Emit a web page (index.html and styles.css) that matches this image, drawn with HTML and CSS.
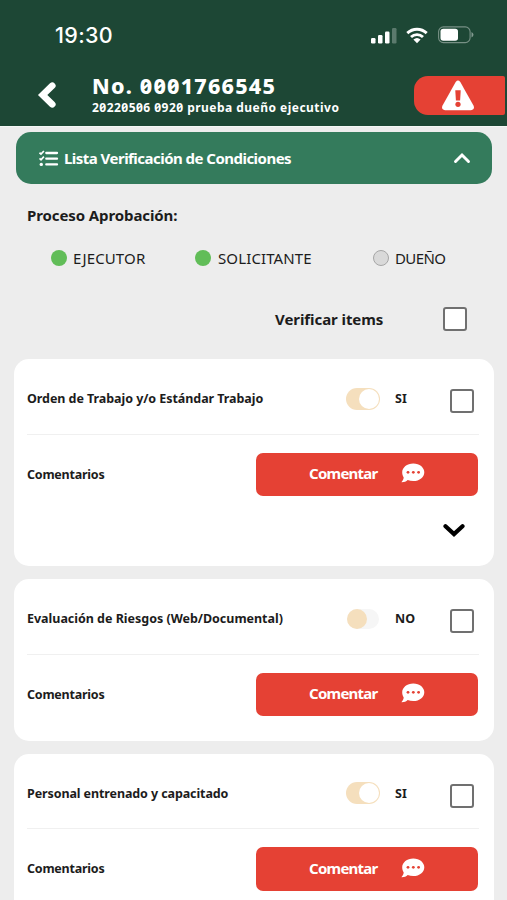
FILE: index.html
```html
<!DOCTYPE html>
<html lang="es">
<head>
<meta charset="utf-8">
<meta name="viewport" content="width=device-width, initial-scale=1">
<title>Lista Verificación de Condiciones</title>
<link rel="stylesheet" href="styles.css">
</head>
<body>
<svg class="sprite" aria-hidden="true">
  <symbol id="comment" viewBox="0 0 24 20">
    <path fill="#fff" d="M12.3.4C18.600.400 23.300 4.300 23.300 9.300C23.300 14.400 18.600 18.100 12.300 18.100C10.300 18.100 8.400 17.700 6.700 17C5.200 18.400 3.300 19.200.9 19.300C.5 19.300.4 19 .7 18.700C1.900 17.500 2.500 16.200 2.700 14.500C1.700 13 1.200 11.300 1.200 9.300C1.200 4.300 6 .4 12.300.4Z"/>
    <g fill="#e54134"><circle cx="7" cy="9.300" r="1.400"/><circle cx="12.300" cy="9.300" r="1.400"/><circle cx="17.600" cy="9.300" r="1.400"/></g>
  </symbol>
</svg>
<header class="header">
  <div class="status">
    <span class="time">19:30</span>
    <svg class="signal" viewBox="0 0 26 17"><g fill="#fff"><rect x="0" y="11" width="4.500" height="5.500" rx="1.200"/><rect x="7" y="8" width="4.500" height="8.500" rx="1.200"/><rect x="14" y="4.500" width="4.500" height="12" rx="1.200"/><rect x="21" y="1" width="4.500" height="15.500" rx="1.200" opacity=".28"/></g></svg>
    <svg class="wifi" viewBox="0 0 22 17"><g fill="none" stroke="#fff" stroke-width="2.900"><path d="M1.300 6.100C6.800.900 15.200.900 20.700 6.100"/><path d="M5 10C8.400 6.800 13.600 6.800 17 10"/></g><path fill="#fff" d="M7.400 12.400Q11 9.400 14.600 12.400L11 16.300Z"/></svg>
    <svg class="battery" viewBox="0 0 36 18"><rect x=".6" y=".9" width="31.500" height="15.700" rx="4.800" fill="none" stroke="#fff" stroke-opacity=".4" stroke-width="1.100"/><rect x="2.500" y="2.800" width="17.500" height="12" rx="2.800" fill="#fff"/><path d="M33.500 6v5.500q2-1 2-2.750t-2-2.750Z" fill="#fff" opacity=".45"/></svg>
  </div>
  <div class="titlebar">
    <svg class="back" viewBox="0 0 20 28"><path d="M15.300 4.700L5.700 14L15.300 23.300" fill="none" stroke="#fff" stroke-width="6.600" stroke-linejoin="miter" stroke-linecap="round"/></svg>
    <div class="titles">
      <h1 class="title">No. 0001766545</h1>
      <p class="subtitle">20220506 0920 prueba dueño ejecutivo</p>
    </div>
    <div class="alert"><svg class="warning" viewBox="0 0 34 31"><path fill="#fff" d="M14.700 2Q17 -.8 19.300 2L32.600 25.800Q34 29.700 30 30.300H4Q0 29.700 1.400 25.800Z"/><path fill="#e54134" d="M14.300 10.300H19.700L19.100 20.500H14.900Z"/><circle cx="17" cy="24.300" r="2.600" fill="#e54134"/></svg></div>
  </div>
</header>
<main>
  <section class="banner">
    <svg class="checklist" viewBox="0 0 20 17"><g fill="none" stroke="#fff"><path stroke-width="2.300" stroke-linecap="round" d="M7.300 3H18M7.300 8.700H18M7.300 14.400H18"/><path stroke-width="1.700" d="M.5 2.700L2 4.100L4.900 1M.5 8.400L2 9.800L4.900 6.700"/></g><circle cx="2.300" cy="14.400" r="1.700" fill="#fff"/></svg>
    <h2 class="banner-title">Lista Verificación de Condiciones</h2>
    <svg class="up" viewBox="0 0 18 12"><path d="M2.500 9.500L9 3L15.500 9.500" fill="none" stroke="#fff" stroke-width="2.900" stroke-linecap="round"/></svg>
  </section>
  <h3 class="process">Proceso Aprobación:</h3>
  <div class="roles">
    <div class="role executor"><i class="dot"></i><span>EJECUTOR</span></div>
    <div class="role requester"><i class="dot"></i><span>SOLICITANTE</span></div>
    <div class="role owner"><i class="dot pending"></i><span>DUEÑO</span></div>
  </div>
  <div class="verify"><span class="verify-label">Verificar items</span><i class="check"></i></div>

  <article class="card expanded">
    <div class="item"><span class="name order">Orden de Trabajo y/o Estándar Trabajo</span><i class="toggle on"></i><span class="answer">SI</span><i class="check"></i></div>
    <div class="comments"><span class="label">Comentarios</span><button class="button"><span>Comentar</span><svg class="bubble"><use href="#comment"/></svg></button></div>
    <svg class="down" viewBox="0 0 22 15"><path d="M2.500 3.200L11 11.100L19.500 3.200" fill="none" stroke="#000" stroke-width="4.200" stroke-linecap="round"/></svg>
  </article>
  <article class="card">
    <div class="item"><span class="name risks">Evaluación de Riesgos (Web/Documental)</span><i class="toggle"></i><span class="answer">NO</span><i class="check"></i></div>
    <div class="comments"><span class="label">Comentarios</span><button class="button"><span>Comentar</span><svg class="bubble"><use href="#comment"/></svg></button></div>
  </article>
  <article class="card">
    <div class="item"><span class="name staff">Personal entrenado y capacitado</span><i class="toggle on"></i><span class="answer">SI</span><i class="check"></i></div>
    <div class="comments"><span class="label">Comentarios</span><button class="button"><span>Comentar</span><svg class="bubble"><use href="#comment"/></svg></button></div>
  </article>
</main>
</body>
</html>
```
FILE: styles.css
```css
* { box-sizing: border-box; }
html { overflow: hidden; }
body { margin: 0; height: 900px; overflow: hidden; background: #ededed; color: #1c1c1c; font-family: "Noto Sans", sans-serif; }
h1, h2, h3, p { margin: 0; }
svg { display: block; flex: none; }
.sprite { display: none; }
span, h1, h2, h3, p { white-space: nowrap; }

.header { height: 127px; background: #1d4735; border-bottom: 1px solid #f5f8f6; color: #fff; }
.status { display: flex; height: 70px; padding-left: 55px; align-items: center; }
.time { width: 316px; font: 500 21.5px/30px Inter, sans-serif; letter-spacing: .35px; }
.signal { width: 26px; height: 17px; }
.wifi { width: 22px; height: 17px; margin-left: 9px; }
.battery { width: 36px; height: 18px; margin-left: 10px; }
.titlebar { display: flex; height: 56px; padding: 4px 2px 0 37px; }
.back { width: 20px; height: 28px; margin-top: 7px; }
.titles { flex: 1; padding-left: 35px; font-feature-settings: "zero"; }
.title { font-size: 21.5px; line-height: 24px; font-weight: 800; letter-spacing: 1.2px; }
.subtitle { margin-top: 2px; font-size: 12px; line-height: 16px; font-weight: 700; letter-spacing: .47px; }
.alert { display: flex; width: 91px; height: 39px; margin-top: 2px; background: #e54134; border-radius: 14px 2px 2px 14px; justify-content: center; }
.warning { width: 34px; height: 31px; margin: 4px 3px 0 0; }

.banner { display: flex; align-items: center; height: 52px; margin: 5px 15px 0 16px; padding: 0 21px 0 23px; border-radius: 15px; background: #347b5c; color: #fff; }
.checklist { width: 20px; height: 17px; }
.banner-title { flex: 1; margin-left: 5px; font-size: 15px; line-height: 20px; letter-spacing: -.53px; }
.up { width: 18px; height: 12px; }
.process { margin: 21px 0 0 27px; font-size: 15px; line-height: 20px; letter-spacing: -.1px; }
.roles { display: flex; margin-top: 23px; padding-left: 51px; font-size: 15px; line-height: 20px; }
.role { display: flex; align-items: center; gap: 6px; }
.executor { width: 144px; letter-spacing: .15px; }
.requester { width: 178px; gap: 7px; letter-spacing: .12px; }
.owner { letter-spacing: -.6px; }
.dot { width: 16px; height: 16px; border-radius: 50%; background: #61bd58; }
.pending { background: #d9d9d9; border: 1.5px solid #a6a6a6; }
.verify { display: flex; align-items: center; justify-content: flex-end; height: 24px; margin: 39px 40px 0 0; font-size: 15px; font-weight: 700; letter-spacing: -.07px; }
.verify-label { width: 168px; }
.check { flex: none; width: 24px; height: 24px; border: 2.5px solid #707070; border-radius: 3px; background: #fff; }

.card { height: 161.500px; margin: 0 13px 13px 14px; padding: .5px 15px 0 13px; border-radius: 15px; background: #fff; font-size: 12.500px; font-weight: 700; }
.expanded { height: 207px; margin-top: 28.4px; }
.item { display: flex; align-items: center; height: 75px; padding: 4px 5px 0 0; border-bottom: 1.5px solid #f0f0f0; }
.name { flex: 1; }
.order { letter-spacing: -.06px; }
.risks { letter-spacing: -.02px; }
.staff { letter-spacing: -.1px; }
.toggle { display: flex; width: 34px; height: 22px; margin-right: 15px; border-radius: 11px; align-items: center; }
.toggle::before { content: ""; width: 20px; height: 20px; border-radius: 50%; background: #f5dfbd; }
.toggle.on { padding-left: 13px; background: #f5dfbd; }
.toggle.on::before { background: #fff; }
.toggle:not(.on) { width: 32px; height: 20px; margin-right: 16px; background: #f6f6f6; }
.answer { width: 55px; letter-spacing: .2px; }
.item .check { margin-top: 5px; }
.comments { display: flex; align-items: center; height: 43px; margin-top: 18px; padding-right: 1px; }
.label { flex: 1; letter-spacing: -.22px; }
.button { display: flex; align-items: center; width: 222px; height: 43.500px; padding: 0 0 2px 53px; border: 0; border-radius: 7px; background: #e54134; color: #fff; font: 700 15px/20px "Noto Sans", sans-serif; letter-spacing: -.75px; }
.button span { width: 92px; text-align: left; }
.bubble { width: 24px; height: 20px; }
.down { width: 22px; height: 15px; margin: 27px 0 0 416px; }
```
